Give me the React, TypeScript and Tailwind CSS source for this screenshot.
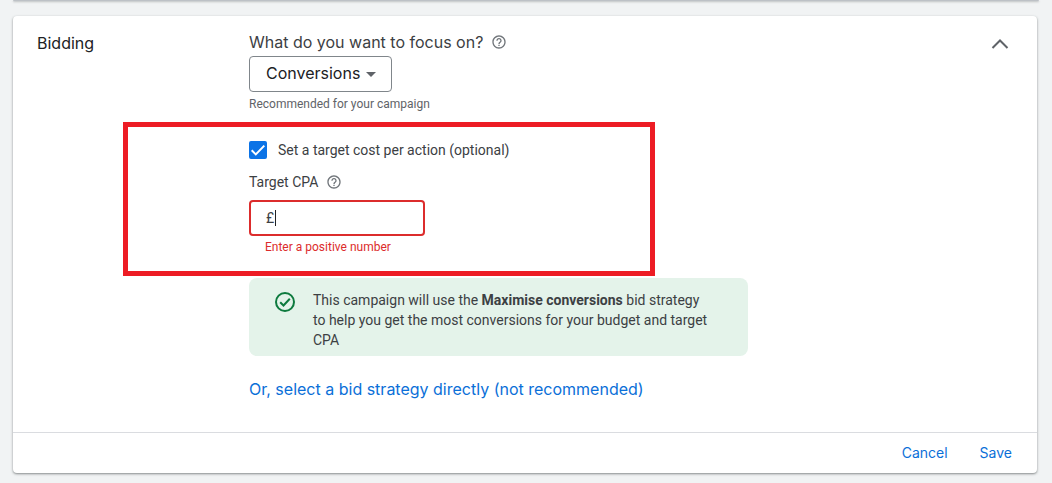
import { useState } from 'react';

function HelpIcon() {
  return (
    <svg className="h-4 w-4 shrink-0 text-[#70757a]" viewBox="0 0 24 24" fill="currentColor" aria-hidden="true">
      <path d="M11 18h2v-2h-2v2zm1-16C6.48 2 2 6.48 2 12s4.48 10 10 10 10-4.48 10-10S17.52 2 12 2zm0 18c-4.41 0-8-3.59-8-8s3.59-8 8-8 8 3.59 8 8-3.59 8-8 8zm0-14c-2.21 0-4 1.79-4 4h2c0-1.1.9-2 2-2s2 .9 2 2c0 2-3 1.75-3 5h2c0-2.25 3-2.5 3-5 0-2.21-1.79-4-4-4z" />
    </svg>
  );
}

export default function App() {
  const [focus, setFocus] = useState('Conversions');
  const [useTarget, setUseTarget] = useState(true);
  const [target, setTarget] = useState('');

  return (
    <main className="min-h-screen bg-[#f1f3f4] px-[13px] pb-[10px] font-['Roboto',sans-serif] text-sm leading-5 text-[#3c4043]">
      <div className="h-px rounded-b bg-[#bdc1c6] shadow-[0_1px_2px_rgba(60,64,67,0.4)]" />

      <section
        className="mr-[2px] mt-[15px] rounded bg-white shadow-[0_1px_2px_rgba(60,64,67,0.4),0_1px_3px_rgba(60,64,67,0.25)]"
        aria-labelledby="bidding-title"
      >
        <div className="flex items-start px-6 pb-[33px] pt-4">
          <h2 id="bidding-title" className="w-[212px] shrink-0 pt-px font-['Inter',sans-serif] text-base leading-5 text-[#202124]">
            Bidding
          </h2>

          <div className="min-w-0 flex-1">
            <div className="flex items-center gap-2">
              <label htmlFor="focus" className="font-['Inter',sans-serif] text-base leading-5">
                What do you want to focus on?
              </label>
              <HelpIcon />
            </div>

            <div className="relative mt-1 w-fit">
              <select
                id="focus"
                className="block h-9 w-[143px] appearance-none rounded border border-[#80868b] bg-white pb-[2px] pl-4 font-['Inter',sans-serif] text-base leading-5 text-[#202124]"
                value={focus}
                onChange={(event) => setFocus(event.target.value)}
              >
                <option>Conversions</option>
                <option>Clicks</option>
              </select>
              <svg className="pointer-events-none absolute right-4 top-4 h-[5px] w-[10px] text-[#5f6368]" viewBox="0 0 10 5" fill="currentColor" aria-hidden="true">
                <path d="M0 0h10L5 5z" />
              </svg>
            </div>
            <p className="mt-1 text-xs leading-4 text-[#5f6368]">Recommended for your campaign</p>

            <div className="relative mt-[10px] pb-[21px] pt-[18px]">
              <div className="pointer-events-none absolute inset-y-0 -left-[126px] w-[532px] border-[5px] border-[#ed1c24]" />
              <div className="flex items-center gap-[11px]">
                <span className="relative h-[18px] w-[18px]">
                  <input
                    id="use-target"
                    type="checkbox"
                    className="block h-[18px] w-[18px] appearance-none rounded-[2px] border-2 border-[#5f6368] checked:border-[#0b73e6] checked:bg-[#0b73e6]"
                    checked={useTarget}
                    onChange={(event) => setUseTarget(event.target.checked)}
                  />
                  {useTarget ? (
                    <svg className="pointer-events-none absolute inset-0 h-full w-full" viewBox="0 0 18 18" fill="none" stroke="#fff" strokeWidth="2" aria-hidden="true">
                      <path d="M2.7 9.3 6.8 13.4 15.3 4.6" />
                    </svg>
                  ) : null}
                </span>
                <label htmlFor="use-target">Set a target cost per action (optional)</label>
              </div>

              <div className="mt-3 flex items-center gap-2">
                <label htmlFor="target-cpa">Target CPA</label>
                <HelpIcon />
              </div>
              <div className="mt-2 flex h-9 w-44 items-center rounded border-2 border-[#dc2c2c] px-[15px]">
                <span>£</span>
                {target === '' ? <span className="ml-px h-4 w-px bg-[#202124]" /> : null}
                <input
                  id="target-cpa"
                  type="text"
                  inputMode="decimal"
                  className="min-w-0 flex-1 bg-transparent outline-none"
                  value={target}
                  onChange={(event) => setTarget(event.target.value)}
                  aria-invalid="true"
                  aria-describedby="target-cpa-error"
                />
              </div>
              <p id="target-cpa-error" className="mt-[3px] pl-4 text-xs leading-4 text-[#dc2c2c]">
                Enter a positive number
              </p>
            </div>

            <div className="mt-[2px] flex max-w-[499px] items-start gap-4 rounded-lg bg-[#e4f3ea] pb-[6px] pl-6 pr-9 pt-3">
              <svg className="h-6 w-6 shrink-0 text-[#0d7a3e]" viewBox="0 0 24 24" fill="none" stroke="currentColor" strokeWidth="2" aria-hidden="true">
                <circle cx="12" cy="12" r="9" />
                <path d="m7.2 12.2 3.3 3.3 6.3-6.7" />
              </svg>
              <p>
                This campaign will use the <b>Maximise conversions</b> bid strategy to help you get the most conversions for your budget and target CPA
              </p>
            </div>

            <a href="#strategy" className="mt-[23px] block w-fit font-['Inter',sans-serif] text-base leading-5 text-[#0b6fd8]">
              Or, select a bid strategy directly (not recommended)
            </a>
          </div>

          <button type="button" className="mr-px" aria-label="Collapse bidding">
            <svg className="h-6 w-6 text-[#5f6368]" viewBox="0 0 24 24" fill="none" stroke="currentColor" strokeWidth="2" aria-hidden="true">
              <path d="m4.5 16 7.5-7.5 7.5 7.5" />
            </svg>
          </button>
        </div>

        <div className="flex h-[41px] items-center justify-end gap-8 border-t border-[#dadce0] px-[25px] font-['Inter',sans-serif] text-sm text-[#0b6fd8]">
          <button type="button">Cancel</button>
          <button type="button">Save</button>
        </div>
      </section>
    </main>
  );
}
